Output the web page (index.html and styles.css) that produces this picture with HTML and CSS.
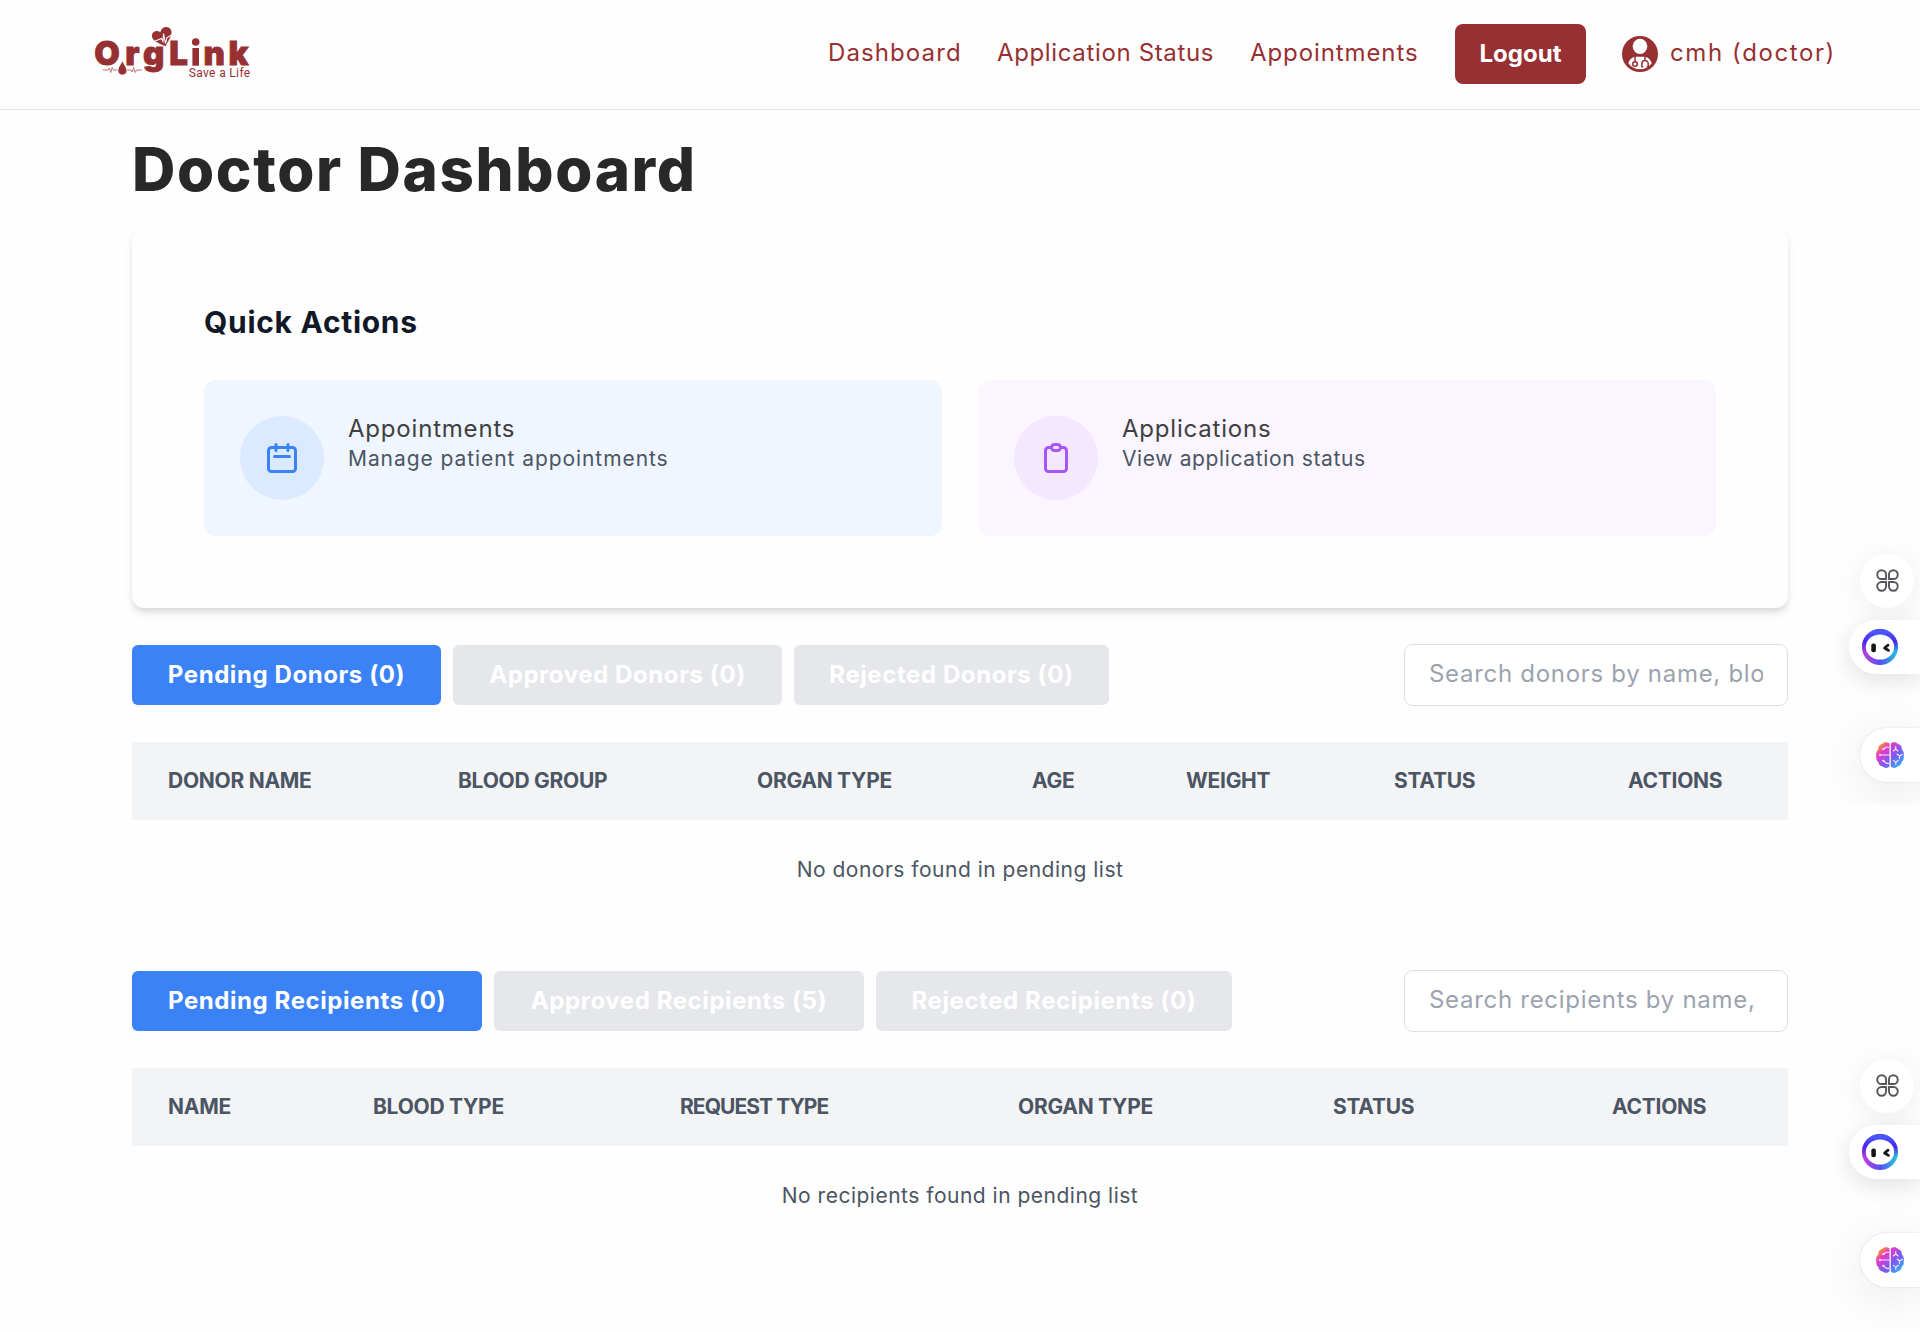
FILE: index.html
```html
<!DOCTYPE html>
<html lang="en">
<head>
<meta charset="utf-8">
<title>OrgLink - Doctor Dashboard</title>
<link rel="stylesheet" href="styles.css">
</head>
<body>
<svg class="defs" width="0" height="0" aria-hidden="true">
  <defs>
    <linearGradient id="ring" x1="0.1" y1="0.75" x2="0.95" y2="0.8">
      <stop offset="0" stop-color="#b43fe0"/><stop offset="0.5" stop-color="#5551f5"/><stop offset="1" stop-color="#22c4dc"/>
    </linearGradient>
    <linearGradient id="ringTop" x1="0" y1="0" x2="0" y2="1">
      <stop offset="0.1" stop-color="#4a55fa"/><stop offset="0.35" stop-color="#4a22f2"/><stop offset="0.65" stop-color="#4a22f2" stop-opacity="0"/>
    </linearGradient>
    <linearGradient id="brainFill" x1="0" y1="0" x2="1" y2="1">
      <stop offset="0.1" stop-color="#f5a020"/><stop offset="0.3" stop-color="#e83ac8"/><stop offset="0.6" stop-color="#7a5af0"/><stop offset="0.9" stop-color="#30b0fa"/>
    </linearGradient>
    <symbol id="clover" viewBox="0 0 24 24">
      <g fill="none" stroke="#55555c" stroke-width="2" stroke-linejoin="round">
        <path d="M10.500 10.500H5.900A4.600 4.600 0 1 1 10.500 5.900Z"/>
        <path d="M13.500 10.500H18.100A4.600 4.600 0 1 0 13.500 5.900Z"/>
        <path d="M10.500 13.500H5.900A4.600 4.600 0 1 0 10.500 18.100Z"/>
        <path d="M13.500 13.500H18.100A4.600 4.600 0 1 1 13.500 18.100Z"/>
      </g>
    </symbol>
    <symbol id="bot" viewBox="0 0 36 36">
      <circle cx="18" cy="18" r="18" fill="url(#ring)"/>
      <circle cx="18" cy="18" r="18" fill="url(#ringTop)"/>
      <ellipse cx="18" cy="18" rx="14.2" ry="12.6" fill="#fff"/>
      <rect x="9.3" y="14.6" width="4.6" height="8.6" rx="2" fill="#161616"/>
      <path d="M26 16.2 22.6 19 26.4 21.4" fill="none" stroke="#161616" stroke-width="2.8" stroke-linecap="round" stroke-linejoin="round"/>
    </symbol>
    <symbol id="brain" viewBox="0 0 28 26">
      <path fill="url(#brainFill)" d="M13.500 1.600C11.500-.4 7.400-.4 6.200 2 3.600 2.400 1.800 4.800 2.300 7.600.2 9.200-.3 12 .3 14c-.3 3 .4 5 2.200 6.200.3 2.600 1.900 4 4.100 4.300C8.500 26.400 12 26.400 13.500 24.300ZM14.800 1.600C17-.4 20.600-.4 21.800 2c2.600.4 4.400 2.800 3.900 5.600C27.800 9.200 28.300 12 27.700 14c.3 3-.4 5-2.200 6.200-.3 2.600-1.900 4-4.100 4.300-1.900 1.900-5 1.900-6.600-.2Z"/>
      <path fill="none" stroke="#fbe4ff" stroke-width="1.1" stroke-linecap="round" d="M13 5.200H10L7.600 7M4 13h9M13 21.400H10.500L7.600 19M17.500 9l2.200-2.200L22 9M19.700 6.800V4.500M21 12l2.500 2 3-1.700M23.500 14v2.500M17.500 18.300l2.300 2 2.600-2M19.800 20.300V22.500"/>
      <g fill="#fbe4ff"><circle cx="7.300" cy="7.100" r="1.100"/><circle cx="4" cy="13" r="1.100"/><circle cx="7.300" cy="18.800" r="1.100"/></g>
    </symbol>
  </defs>
</svg>

<header class="header">
  <a class="logo" aria-label="OrgLink">
    <svg viewBox="92 20 164 64" width="164" height="64">
      <g class="brand">
        <text class="brand-name" y="65.400" x="94.300 125.200 143 169.200">OrgL</text>
        <text class="brand-name" y="65.400" x="203.400 228.600">nk</text>
        <rect x="192.400" y="48" width="6.600" height="17.700"/>
        <circle cx="195.700" cy="42" r="3.800"/>
        <text class="brand-tag" x="188.800" y="77">Save a Life</text>
        <path d="M165.500 46.200C159 43.500 153.500 41.500 152.100 37.200 150.900 32.500 156 29.200 160.300 32.200 161.300 27 167.800 25.400 170.600 29.200 173.600 34 168.500 40 165.500 46.200Z"/>
        <path d="M122.400 61.500C124.200 65 126.500 67.800 126.500 70.600A4.100 4.100 0 0 1 118.300 70.600C118.300 67.800 120.600 65 122.400 61.500Z"/>
      </g>
      <path class="pulse-light" d="M154 41.500l5-2 2.500-1 1.500 3 .5-8 2 10 1.500-6 4.500-2.500"/>
      <path class="pulse" d="M103 70h5l1.500-2 1.200 4.500 1.500-5 1.200 2.500h4M127 70h4l1.200 2 1.500-4.500 1.500 5 1.300-2.500h5.500"/>
    </svg>
  </a>
  <nav class="nav">
    <a class="nav-link nav-dashboard">Dashboard</a>
    <a class="nav-link nav-status">Application Status</a>
    <a class="nav-link nav-appointments">Appointments</a>
    <button class="logout">Logout</button>
    <span class="user">
      <svg width="36" height="36" viewBox="0 0 36 36">
        <circle cx="18" cy="18" r="18" fill="#973032"/>
        <ellipse cx="18" cy="10.300" rx="7.300" ry="7.600" fill="#fff"/>
        <path fill="#fff" d="M12.500 20.700Q8 22 6.200 27.200 11 33.200 18 33.200T29.800 27.200Q28 22 23.500 20.700Z"/>
        <g fill="none" stroke="#973032" stroke-width="1.5"><path d="M13 20v5.500M23 20v4.500M19.800 31v-3.200a3.200 3.200 0 0 1 6.400 0V31M19.500 30.800h1.700M24.800 30.800h1.700"/><circle cx="13" cy="28" r="2.300"/></g>
      </svg>
      <span class="nav-link nav-user">cmh (doctor)</span>
    </span>
  </nav>
</header>

<main class="main">
  <h1 class="title">Doctor Dashboard</h1>

  <section class="card">
    <h2 class="card-title">Quick Actions</h2>
    <div class="tiles">
      <a class="tile tile-blue">
        <span class="tile-icon">
          <svg width="36" height="36" viewBox="0 0 24 24"><path d="M8 7V3m8 4V3M7 11h10M5 21h14a2 2 0 0 0 2-2V7a2 2 0 0 0-2-2H5a2 2 0 0 0-2 2v12a2 2 0 0 0 2 2z"/></svg>
        </span>
        <span class="tile-text"><span class="tile-title">Appointments</span><span class="tile-sub wide">Manage patient appointments</span></span>
      </a>
      <a class="tile tile-purple">
        <span class="tile-icon">
          <svg width="36" height="36" viewBox="0 0 24 24"><path d="M9 5H7a2 2 0 0 0-2 2v12a2 2 0 0 0 2 2h10a2 2 0 0 0 2-2V7a2 2 0 0 0-2-2h-2M9 5a2 2 0 0 0 2 2h2a2 2 0 0 0 2-2M9 5a2 2 0 0 1 2-2h2a2 2 0 0 1 2 2"/></svg>
        </span>
        <span class="tile-text"><span class="tile-title">Applications</span><span class="tile-sub">View application status</span></span>
      </a>
    </div>
  </section>

  <section class="list">
    <div class="toolbar">
      <div class="tabs donor-tabs">
        <button class="tab active">Pending Donors (0)</button>
        <button class="tab">Approved Donors (0)</button>
        <button class="tab">Rejected Donors (0)</button>
      </div>
      <input class="search" type="text" placeholder="Search donors by name, blood group...">
    </div>
    <table class="table donors">
      <thead><tr><th>Donor Name</th><th>Blood Group</th><th>Organ Type</th><th>Age</th><th>Weight</th><th>Status</th><th>Actions</th></tr></thead>
      <tbody><tr><td colspan="7">No donors found in pending list</td></tr></tbody>
    </table>
  </section>

  <section class="list">
    <div class="toolbar">
      <div class="tabs recipient-tabs">
        <button class="tab active">Pending Recipients (0)</button>
        <button class="tab">Approved Recipients (5)</button>
        <button class="tab">Rejected Recipients (0)</button>
      </div>
      <input class="search" type="text" placeholder="Search recipients by name, organ...">
    </div>
    <table class="table recipients">
      <thead><tr><th>Name</th><th>Blood Type</th><th class="tight">Request Type</th><th>Organ Type</th><th>Status</th><th>Actions</th></tr></thead>
      <tbody><tr><td colspan="6">No recipients found in pending list</td></tr></tbody>
    </table>
  </section>
</main>

<aside class="dock dock-upper">
  <span class="dock-apps"><svg width="23" height="23"><use href="#clover"/></svg></span>
  <span class="dock-bot"><svg width="36" height="36"><use href="#bot"/></svg></span>
  <span class="dock-brain"><svg width="28" height="26"><use href="#brain"/></svg></span>
</aside>
<aside class="dock dock-lower">
  <span class="dock-apps"><svg width="23" height="23"><use href="#clover"/></svg></span>
  <span class="dock-bot"><svg width="36" height="36"><use href="#bot"/></svg></span>
  <span class="dock-brain"><svg width="28" height="26"><use href="#brain"/></svg></span>
</aside>
</body>
</html>
```
FILE: styles.css
```css
* { box-sizing: border-box; }
body {
  margin: 0;
  height: 1332px;
  position: relative;
  overflow: hidden;
  background: #fefefe;
  font-family: Inter, "Open Sans", sans-serif;
  font-size: 24px;
  color: #404040;
}
button, input { font: inherit; border: 0; margin: 0; }
.defs { position: absolute; }

.header {
  display: flex;
  justify-content: space-between;
  align-items: center;
  height: 110px;
  padding: 0 84px 1px 92px;
  border-bottom: 1px solid #e5e7eb;
}
.logo { display: block; padding-bottom: 4px; }
.logo svg { display: block; }
.brand { fill: #973032; }
.brand-name { font: 900 33px Inter, sans-serif; stroke: #973032; stroke-width: .8; }
.brand-tag { font: 400 12px Roboto, sans-serif; letter-spacing: .34px; }
.pulse { fill: none; stroke: #b5676a; stroke-width: .9; }
.pulse-light { fill: none; stroke: #fff; stroke-width: 1.1; }

.nav { display: flex; align-items: center; gap: 36px; }
.nav-link { color: #973032; white-space: nowrap; padding-bottom: 3px; line-height: 36px; }
.nav-dashboard { width: 134px; letter-spacing: 1.1px; text-indent: 1px; }
.nav-status { width: 218px; letter-spacing: .64px; }
.nav-appointments { width: 168px; letter-spacing: .9px; text-indent: -1px; }
.logout {
  width: 131px;
  height: 60px;
  padding: 0 0 1px;
  border-radius: 8px;
  background: #973032;
  color: #fff;
  font-weight: 700;
}
.user { display: flex; align-items: center; gap: 12px; }
.nav-user { width: 166px; letter-spacing: 1.6px; }

.main { padding: 29px 132px 0; }
.title {
  margin: 0 0 29px;
  font-size: 60px;
  line-height: 60px;
  font-weight: 800;
  letter-spacing: 1.65px;
  color: #282828;
}
.card {
  height: 380px;
  padding: 72px;
  border-radius: 12px;
  background: #fefefe;
  box-shadow: 0 6px 9px -1px rgba(0, 0, 0, .1), 0 3px 6px -2px rgba(0, 0, 0, .1);
}
.card-title {
  margin: 0 0 35px;
  font-size: 30px;
  line-height: 45px;
  font-weight: 700;
  letter-spacing: .7px;
  color: #111827;
}
.tiles { display: grid; grid-template-columns: 1fr 1fr; gap: 36px; }
.tile { display: flex; gap: 24px; height: 156px; padding: 36px; border-radius: 12px; }
.tile-blue { background: #eff6ff; }
.tile-purple { background: #faf5ff; }
.tile-icon {
  display: flex;
  align-items: center;
  justify-content: center;
  width: 84px;
  height: 84px;
  border-radius: 50%;
}
.tile-icon path { fill: none; stroke-width: 2; stroke-linecap: round; stroke-linejoin: round; }
.tile-blue .tile-icon { background: #dbeafe; }
.tile-blue path { stroke: #3b82f6; }
.tile-purple .tile-icon { background: #f3e8ff; }
.tile-purple path { stroke: #a855f7; }
.tile-text { display: flex; flex-direction: column; padding-top: 1px; }
.tile-title { line-height: 24px; letter-spacing: .8px; color: #404040; }
.tile-sub { font-size: 21px; line-height: 36px; letter-spacing: .63px; color: #4b5563; }
.tile-sub.wide { letter-spacing: .93px; }

.list { margin-top: 36px; }
.list + .list { margin-top: 50px; }
.toolbar { display: flex; justify-content: space-between; align-items: center; height: 62px; }
.tabs { display: grid; gap: 12px; }
.donor-tabs { grid-template-columns: 309px 329px 315px; }
.recipient-tabs { grid-template-columns: 350px 370px 356px; }
.tab {
  height: 60px;
  padding: 0 0 2px;
  border-radius: 6px;
  background: #e5e7eb;
  color: #fff;
  font-weight: 700;
  letter-spacing: .58px;
  white-space: nowrap;
}
.tab.active { background: #3b82f6; }
.search {
  width: 384px;
  height: 62px;
  padding: 0 24px 3px;
  border: 1px solid #dcdfe4;
  border-radius: 9px;
  background: #fff;
  letter-spacing: .7px;
}
.search::placeholder { color: #9ca3af; }

.table { width: 1656px; margin-top: 36px; border-collapse: collapse; table-layout: fixed; }
.table th {
  height: 78px;
  padding: 0 0 2px 36px;
  background: #f3f4f6;
  color: #4b5563;
  font-size: 21px;
  font-weight: 700;
  letter-spacing: -.27px;
  text-align: left;
  text-transform: uppercase;
  white-space: nowrap;
}
.table th.tight { letter-spacing: -.95px; }
.table td { height: 100px; padding: 0 0 2px; text-align: center; font-size: 21px; letter-spacing: .5px; color: #4b5563; }
.donors th:nth-child(1) { width: 290px; }
.donors th:nth-child(2) { width: 299px; }
.donors th:nth-child(3) { width: 275px; }
.donors th:nth-child(4) { width: 154px; }
.donors th:nth-child(5) { width: 208px; }
.donors th:nth-child(6) { width: 234px; }
.recipients th:nth-child(1) { width: 205px; }
.recipients th:nth-child(2) { width: 307px; }
.recipients th:nth-child(3) { width: 338px; }
.recipients th:nth-child(4) { width: 315px; }
.recipients th:nth-child(5) { width: 279px; }

/* Floating extension buttons pinned to the right edge of the window */
.dock {
  position: absolute;
  right: 0;
  width: 130px;
  height: 305px;
  padding-top: 54px;
  overflow: hidden;
  display: flex;
  flex-direction: column;
  align-items: flex-end;
  pointer-events: none;
}
.dock-upper { top: 500px; }
.dock-lower { top: 1005px; height: 327px; }
.dock span { display: flex; align-items: center; height: 54px; flex: none; background: #fff; }
.dock .dock-apps { width: 54px; margin-right: 6px; padding-bottom: 1px; border-radius: 50%; justify-content: center; box-shadow: 0 4px 30px rgba(0, 0, 0, .07); }
.dock .dock-bot { width: 71px; margin-top: 12px; padding-left: 13px; border-radius: 27px 0 0 27px; box-shadow: 0 6px 24px rgba(0, 0, 0, .12); }
.dock .dock-brain { width: 60px; margin-top: 54px; padding-left: 16px; border-radius: 27px 0 0 27px; box-shadow: 0 0 2px rgba(0, 0, 0, .14), 0 10px 50px rgba(0, 0, 0, .09); }
```
